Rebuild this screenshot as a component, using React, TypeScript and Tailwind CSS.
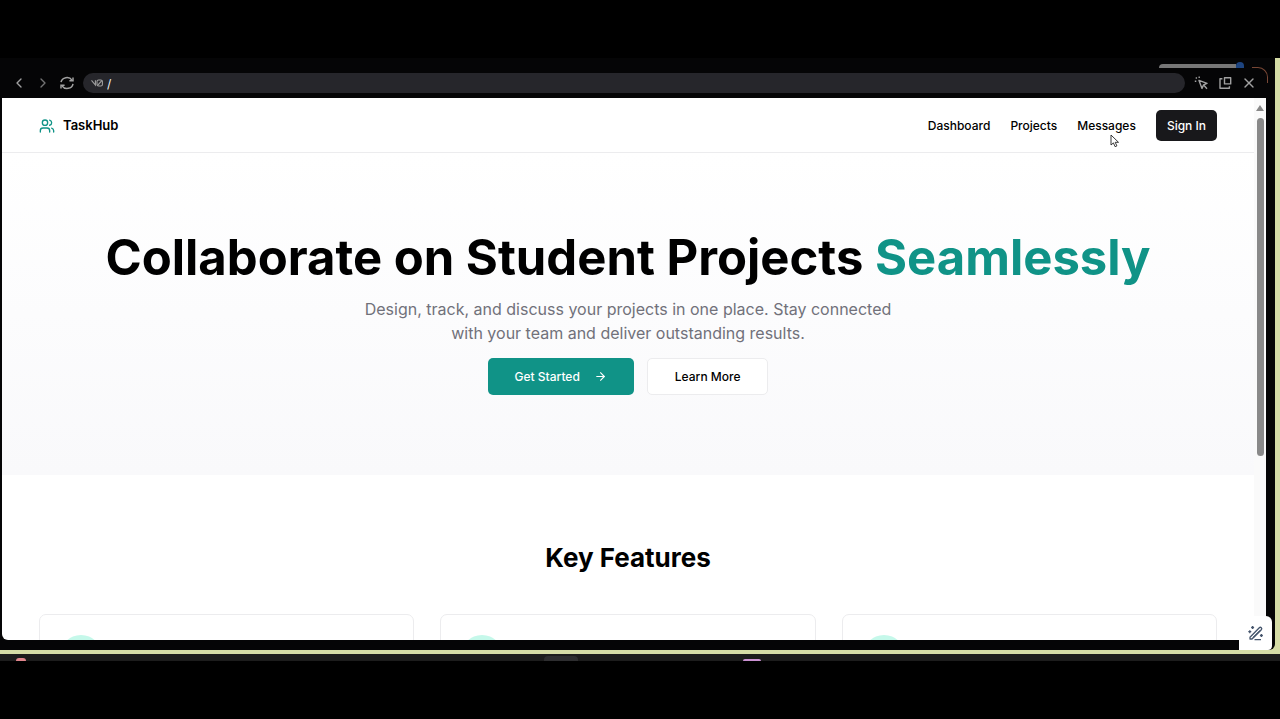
import { ArrowRight, ChevronLeft, ChevronRight, Users, X } from "lucide-react";

const features = ["Projects", "Progress", "Discussion"];
const links = ["Dashboard", "Projects", "Messages"];

function RefreshIcon() {
  return (
    <svg className="size-4" viewBox="0 0 16 16" fill="none" stroke="currentColor" strokeWidth="1.5" aria-hidden="true">
      <path d="M2 7.2A6 5.6 0 0 1 13 5.2M14 8.8A6 5.6 0 0 1 3 10.8" />
      <path d="M14 2.4v3.4h-3.6M2 13.6v-3.4h3.6" />
    </svg>
  );
}

function InspectIcon() {
  return (
    <svg className="size-4" viewBox="0 0 16 16" fill="none" stroke="currentColor" strokeWidth="1.4" aria-hidden="true">
      <path d="M6 5.4l8 3-3.4 1.5L9 13.4z" strokeLinejoin="round" />
      <path d="M10.6 10l3.4 3.8" />
      <path d="M6.2 1.6v1.5M1.8 6.2h1.5M2.8 2.6l1 1" />
    </svg>
  );
}

function PopOutIcon() {
  return (
    <svg className="size-4" viewBox="0 0 16 16" fill="none" stroke="currentColor" strokeWidth="1.4" aria-hidden="true">
      <path d="M7.5 2.7h6.2V8.9H7.5z" strokeLinejoin="round" />
      <path d="M5.4 3.8H3v9.5h9.4v-2" strokeLinejoin="round" />
    </svg>
  );
}

function WandIcon() {
  return (
    <svg className="size-4" viewBox="0 0 16 16" fill="none" stroke="currentColor" strokeWidth="1.3" aria-hidden="true">
      <path d="M2 12.2L11.3 2.8a1.4 1.4 0 0 1 2 2L4 14H2z" strokeLinejoin="round" />
      <path d="M5 12.8L12 5.8M6.5 14.6h6.5" />
      <path d="M4.6 1v3M3.1 2.5h3M1.8 5.2v3M.3 6.7h3M13.4 9v3M11.9 10.5h3" />
    </svg>
  );
}

function BrowserBar() {
  return (
    <div className="flex h-[30px] items-center gap-2 px-[9px] text-neutral-400">
      <button aria-label="Back" className="flex size-4 items-center justify-center">
        <ChevronLeft className="size-4" />
      </button>
      <button aria-label="Forward" className="flex size-4 items-center justify-center text-neutral-500">
        <ChevronRight className="size-4" />
      </button>
      <button aria-label="Reload" className="flex size-4 items-center justify-center">
        <RefreshIcon />
      </button>
      <div className="flex h-5 min-w-0 flex-1 items-center rounded-full bg-[#26262b] px-2">
        <svg className="h-2 w-3" viewBox="0 0 12 8" fill="none" stroke="currentColor" strokeWidth="1.1" aria-label="v0">
          <path d="M.5 1.4L4.4 6V1.2" />
          <rect x="6" y="1" width="5.4" height="6" rx="1.6" />
          <path d="M6.6 6.4L10.8 1.6" />
        </svg>
        <input
          aria-label="Page path"
          defaultValue="/"
          className="h-5 min-w-0 flex-1 bg-transparent px-1 text-[12px] text-neutral-100 outline-none"
        />
      </div>
      <button aria-label="Inspect" className="flex size-4 items-center justify-center">
        <InspectIcon />
      </button>
      <button aria-label="Open in new window" className="flex size-4 items-center justify-center">
        <PopOutIcon />
      </button>
      <button aria-label="Close" className="flex size-4 items-center justify-center">
        <X className="size-4" />
      </button>
    </div>
  );
}

function Header() {
  return (
    <header className="relative flex items-center justify-between border-b border-[#ececee] px-[37px] pt-3 pb-[11px]">
      <a href="#home" className="flex items-center gap-2 text-[13px] font-semibold">
        <Users className="size-4 text-[#109387]" strokeWidth={2} />
        TaskHub
      </a>
      <nav className="flex items-center gap-5 text-[12px] font-medium">
        {links.map((link) => (
          <a key={link} href={"#" + link.toLowerCase()}>
            {link}
          </a>
        ))}
        <button className="h-[31px] rounded-[5px] bg-[#18181b] px-[11px] text-white">Sign In</button>
      </nav>
      <svg className="absolute right-[134px] bottom-1 h-[14px] w-[10px]" viewBox="0 0 10 14" aria-hidden="true">
        <path d="M1 1v10l2.4-2.1 1.7 3.8 1.8-.8-1.7-3.6h3.3z" fill="#fff" stroke="#222" strokeWidth=".9" />
      </svg>
    </header>
  );
}

function Hero() {
  return (
    <section className="flex flex-col items-center bg-gradient-to-b from-white to-[#f9f9fb] px-6 py-20 text-center">
      <h1 className="text-[49px] leading-[50px] font-bold">
        Collaborate on Student Projects <span className="text-[#109387]">Seamlessly</span>
      </h1>
      <p className="mt-[14px] max-w-[560px] text-[16px] leading-6 text-[#71717a]">
        Design, track, and discuss your projects in one place. Stay connected with your team and deliver outstanding
        results.
      </p>
      <div className="mt-[13px] flex gap-[13px] text-[12px] font-medium">
        <button className="flex h-[37px] items-center gap-[14px] rounded-[5px] bg-[#109387] px-[27px] text-white">
          Get Started
          <ArrowRight className="size-[13px]" />
        </button>
        <button className="h-[37px] rounded-[5px] border border-[#ececee] bg-white px-[27px]">Learn More</button>
      </div>
    </section>
  );
}

function Features() {
  return (
    <section className="px-[37px] pt-[67px]">
      <h2 className="text-center text-[26px] leading-8 font-bold">Key Features</h2>
      <div className="mt-10 grid grid-cols-3 gap-[26px]">
        {features.map((feature) => (
          <article key={feature} className="h-40 rounded-[7px] border border-[#ececee] px-5 py-5">
            <div className="size-[42px] rounded-full bg-[#c5f8ea]" />
          </article>
        ))}
      </div>
    </section>
  );
}

export default function App() {
  return (
    <div className="flex h-screen flex-col overflow-hidden bg-black py-[58px] font-[Inter,'Liberation_Sans',sans-serif] text-black">
      <div className="relative flex min-h-0 flex-1 flex-col bg-[#d5dca6] pr-[5px] pb-1">
        <div className="relative flex min-h-0 flex-1 flex-col overflow-hidden rounded-br-[6px] bg-[#050506] pr-[9px] pb-[10px] pl-[2px]">
          <div className="flex h-[10px] items-end justify-end pr-[22px]">
            <div className="h-1 w-[77px] rounded-tl bg-[#777]" />
            <div className="h-[6px] w-2 rounded-t-full bg-[#1d4480]" />
          </div>
          <BrowserBar />
          <div className="absolute top-[9px] right-[7px] size-4 rounded-tr-[10px] border-t border-r border-[#794735]" />
          <main className="flex min-h-0 flex-1 overflow-hidden rounded-b-[6px] bg-white">
            <div className="min-w-0 flex-1 overflow-hidden">
              <Header />
              <Hero />
              <Features />
            </div>
            <div className="flex w-3 flex-col items-center bg-[#fafafa] pt-[7px]">
              <svg className="h-[6px] w-2" viewBox="0 0 8 6" fill="#888" aria-hidden="true">
                <path d="M4 0l4 6H0z" />
              </svg>
              <div className="mt-[7px] h-[338px] w-[7px] rounded-full bg-[#898989]" />
            </div>
          </main>
          <button
            aria-label="Edit with wand"
            className="absolute right-[3px] bottom-0 flex h-[34px] w-[33px] items-center justify-center rounded-t-[6px] rounded-br-[4px] bg-white text-slate-600"
          >
            <WandIcon />
          </button>
        </div>
      </div>
      <div className="flex h-[7px] shrink-0 items-end overflow-hidden bg-[#1c1c1c]">
        <div className="ml-4 h-[3px] w-[10px] rounded-t-full bg-[#e0858c]" />
        <div className="ml-[518px] h-[5px] w-[34px] rounded-t bg-[#2d2d2f]" />
        <div className="ml-[165px] h-[2px] w-[18px] rounded-t-full bg-[#ca91d2]" />
      </div>
    </div>
  );
}
